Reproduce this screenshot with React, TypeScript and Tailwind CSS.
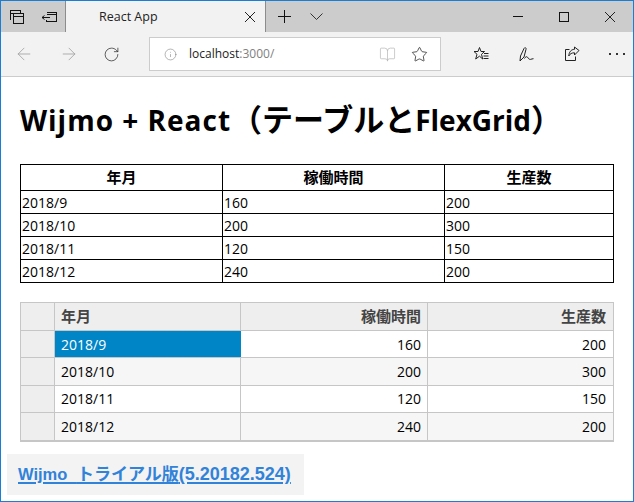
import { RotateCw, ArrowLeft, ArrowRight, Info, Star, BookOpen } from "lucide-react";

const font = "[font-family:'Open_Sans','Noto_Sans_CJK_JP',sans-serif]";

const rows = [
    ["2018/9", "160", "200"],
    ["2018/10", "200", "300"],
    ["2018/11", "120", "150"],
    ["2018/12", "240", "200"],
];

const TabsIcon = () => (
    <svg width="16" height="16" viewBox="0 0 16 16" fill="none" stroke="#111" strokeWidth="1" shapeRendering="crispEdges">
        <path d="M1.500 10.500v-9h10v3" />
        <path d="M1.500 4.500h3" />
        <rect x="4.500" y="4.500" width="10" height="9.500" fill="#ccc" />
        <path d="M4.500 7.500h10" />
    </svg>
);

const SetAsideIcon = () => (
    <svg width="17" height="12" viewBox="0 0 17 12" fill="none" stroke="#111" strokeWidth="1">
        <path d="M5.500 1.500h10v9h-10v-2" shapeRendering="crispEdges" />
        <path d="M5.500 3.500h10" shapeRendering="crispEdges" />
        <path d="M1 6.500h8M3.500 4.500l-2.500 2 2.500 2" />
    </svg>
);

const CloseIcon = ({ size }: { size: number }) => (
    <svg width={size} height={size} viewBox={`0 0 ${size} ${size}`} stroke="#222" strokeWidth="1">
        <path d={`M0 0L${size} ${size}M${size} 0L0 ${size}`} />
    </svg>
);

const PlusIcon = () => (
    <svg width="13" height="13" viewBox="0 0 13 13" stroke="#111" strokeWidth="1" shapeRendering="crispEdges">
        <path d="M6.500 0v13M0 6.500h13" />
    </svg>
);

const ChevronIcon = () => (
    <svg width="13" height="7" viewBox="0 0 13 7" fill="none" stroke="#333" strokeWidth="1">
        <path d="M0.500 0.500l6 6 6-6" />
    </svg>
);

const FavListIcon = () => (
    <svg width="17" height="17" viewBox="0 0 17 17" fill="none" stroke="#222" strokeWidth="1">
        <path d="M6.500 1.500l1.500 4h3.500l-3 2.800 1.200 4.700-3.200-2.800-3.800 2.800 1.300-4.700L1 5.500h4z" />
        <path d="M11 7.500h4.500M10.500 10h5M10.500 12.500h5" />
    </svg>
);

const PenIcon = () => (
    <svg width="16" height="16" viewBox="0 0 16 16" fill="none" stroke="#222" strokeWidth="1">
        <path d="M1 15l.5-5 3.500-7.500c.8-1.500 2.500-.8 2 .8L5 11l-4 4z" />
        <path d="M5.500 12.500c1-1.800 2-2.300 3-1.300s1.500 2.500 3 2.200c1-.2 2-.8 3-.7" />
    </svg>
);

const ShareIcon = () => (
    <svg width="16" height="16" viewBox="0 0 16 16" fill="none" stroke="#222" strokeWidth="1">
        <path d="M5.500 3.500h-4v11h10v-4" />
        <path d="M15 4.500L10.500 1v2.300C7 3.500 5 6 4.800 10c1.200-2.300 3-3.200 5.700-3.200V9z" />
    </svg>
);

const DotsIcon = () => (
    <svg width="16" height="3" viewBox="0 0 16 3" fill="#333" shapeRendering="crispEdges">
        <rect x="0" y="0" width="2" height="2" />
        <rect x="7" y="0" width="2" height="2" />
        <rect x="14" y="0" width="2" height="2" />
    </svg>
);

export default function App() {
    return (
        <div className={`w-[634px] h-[502px] overflow-hidden bg-white border border-[#1a7fd4] flex flex-col text-black ${font}`}>
            <div className="h-[31px] shrink-0 bg-[#cccccc] flex items-stretch text-[#222]">
                <div className="w-[32px] flex items-center justify-center"><TabsIcon /></div>
                <div className="w-[32px] flex items-center justify-center"><SetAsideIcon /></div>
                <div className="w-[201px] bg-[#f2f2f2] border-x border-[#8c8c8c] flex items-center pl-[33px] pr-[10px] justify-between">
                    <span className="text-[12.500px] pt-px">React App</span>
                    <CloseIcon size={10} />
                </div>
                <div className="w-[36px] flex items-center justify-center"><PlusIcon /></div>
                <div className="w-[28px] flex items-center justify-center"><ChevronIcon /></div>
                <div className="flex-1" />
                <div className="w-[46px] flex items-center justify-center">
                    <div className="w-[10px] h-px bg-[#111]" />
                </div>
                <div className="w-[46px] flex items-center justify-center">
                    <div className="size-[10px] border border-[#111]" />
                </div>
                <div className="w-[46px] flex items-center justify-center"><CloseIcon size={10} /></div>
            </div>
            <div className="h-[45px] shrink-0 bg-[#f2f2f2] border-b border-[#cccccc] flex items-center text-[#222]">
                <div className="w-[46px] flex justify-center text-[#a0a0a0]"><ArrowLeft size={20} strokeWidth={1} /></div>
                <div className="w-[43px] flex justify-center text-[#a0a0a0]"><ArrowRight size={20} strokeWidth={1} /></div>
                <div className="w-[43px] flex justify-center"><RotateCw size={17} strokeWidth={1} /></div>
                <div className="ml-[16px] w-[292px] h-[34px] bg-white border border-[#cccccc] flex items-center pl-[14px] pr-[12px]">
                    <Info size={13} strokeWidth={1} className="text-[#777]" />
                    <span className="ml-[12px] text-[12px]">localhost<span className="text-[#808080]">:3000/</span></span>
                    <BookOpen size={17} strokeWidth={1} className="ml-auto text-[#b5b5b5]" />
                    <Star size={17} strokeWidth={1} className="ml-[15px] text-[#111]" />
                </div>
                <div className="ml-[28px] w-[24px] flex justify-center"><FavListIcon /></div>
                <div className="ml-[22px] w-[24px] flex justify-center"><PenIcon /></div>
                <div className="ml-[21px] w-[24px] flex justify-center"><ShareIcon /></div>
                <div className="ml-[21px] w-[24px] flex justify-center"><DotsIcon /></div>
            </div>
            <div className="flex-1 px-[19px] pt-[23px]">
                <h1 className="text-[31px] leading-[38px] font-bold whitespace-nowrap">
                    <span className="text-[28px] tracking-[1px]">Wijmo + React</span>（テーブルと<span className="text-[28px]">FlexGrid</span>）
                </h1>
                <table className="mt-[25px] w-[594px] table-fixed border-collapse border border-black text-[14px] leading-[19px]">
                    <thead>
                        <tr className="h-[26px] text-[15px]">
                            <th className="w-[202px] border border-black font-bold">年月</th>
                            <th className="w-[222px] border border-black font-bold">稼働時間</th>
                            <th className="border border-black font-bold">生産数</th>
                        </tr>
                    </thead>
                    <tbody>
                        {rows.map((r) => (
                            <tr key={r[0]} className="h-[23px]">
                                {r.map((c, i) => (
                                    <td key={i} className="border border-black pl-px py-0">{c}</td>
                                ))}
                            </tr>
                        ))}
                    </tbody>
                </table>
                <div className="mt-[19px] w-[594px] border border-[#c6c6c6] border-b-2 text-[14px]">
                    <div className="grid grid-cols-[34px_186px_187px_1fr] h-[28px] bg-[#eeeeee] border-b border-[#c6c6c6] font-bold text-[15px] text-[#444]">
                        <div className="border-r border-[#c6c6c6]" />
                        <div className="border-r border-[#c6c6c6] flex items-center px-[6px]">年月</div>
                        <div className="border-r border-[#c6c6c6] flex items-center justify-end px-[6px]">稼働時間</div>
                        <div className="flex items-center justify-end pl-[6px] pr-[7px]">生産数</div>
                    </div>
                    {rows.map((r, i) => (
                        <div key={r[0]} className={`grid grid-cols-[34px_186px_187px_1fr] h-[27.25px] border-b border-[#c6c6c6] last:border-b-0 ${i % 2 ? "bg-[#f6f6f6]" : "bg-white"}`}>
                            <div className="bg-[#eeeeee] border-r border-[#c6c6c6]" />
                            <div className={`flex items-center px-[6px] ${i === 0 ? "bg-[#0085c7] text-white" : "border-r border-[#c6c6c6]"}`}>{r[0]}</div>
                            <div className="border-r border-[#c6c6c6] flex items-center justify-end px-[6px]">{r[1]}</div>
                            <div className="flex items-center justify-end pl-[6px] pr-[7px]">{r[2]}</div>
                        </div>
                    ))}
                </div>
                <div className="-ml-[13px] mt-[12px] w-[297px] h-[41px] bg-[#f3f3f3] flex items-center pl-[11px]">
                    <a href="#" className="text-[17px] font-bold text-[#3182d9] underline decoration-2 underline-offset-2 whitespace-nowrap [font-family:'Liberation_Sans','Noto_Sans_CJK_JP',sans-serif]">
                        <span className="text-[16.500px] [word-spacing:5px]">Wijmo </span>トライアル版<span className="text-[18px]">(5.20182.524)</span>
                    </a>
                </div>
            </div>
        </div>
    );
}
